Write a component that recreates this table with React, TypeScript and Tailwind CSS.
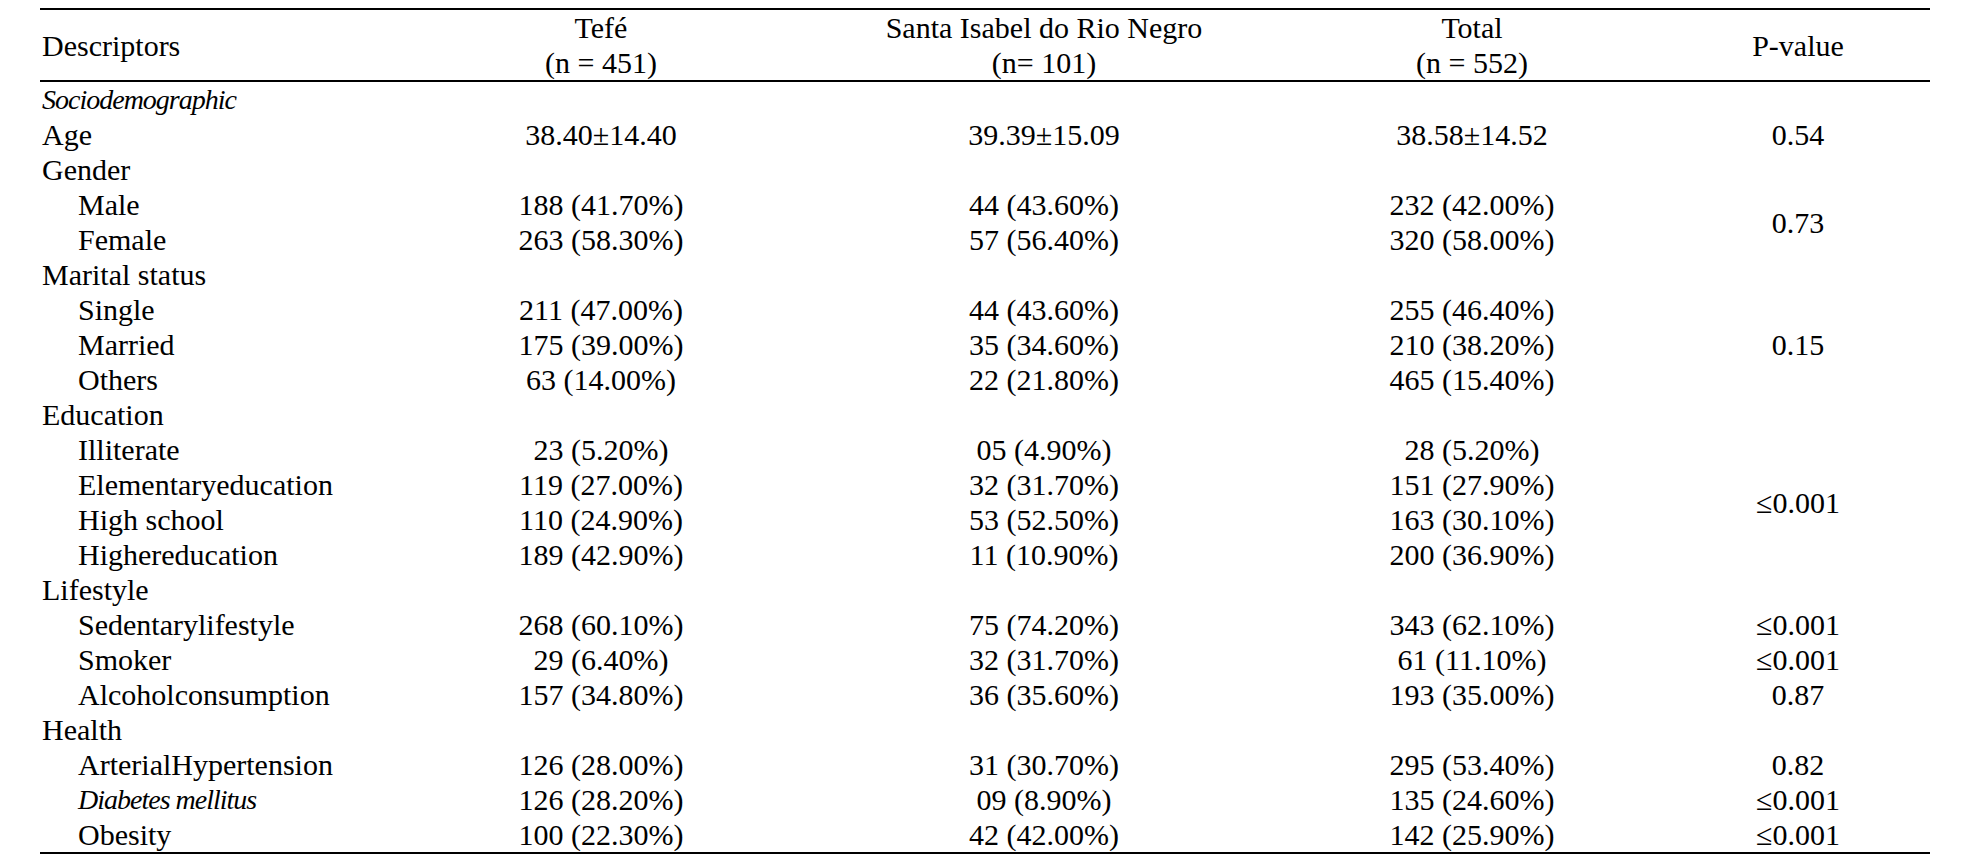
import React from "react";

type Row = {
  label: string;
  level: 0 | 1;
  italic?: boolean;
  cells?: [string, string, string];
  p?: string;
  pSpan?: number;
  pSkip?: boolean;
};

const rows: Row[] = [
  { label: "Sociodemographic", level: 0, italic: true },
  { label: "Age", level: 0, cells: ["38.40\u00b114.40", "39.39\u00b115.09", "38.58\u00b114.52"], p: "0.54" },
  { label: "Gender", level: 0 },
  { label: "Male", level: 1, cells: ["188 (41.70%)", "44 (43.60%)", "232 (42.00%)"], p: "0.73", pSpan: 2 },
  { label: "Female", level: 1, cells: ["263 (58.30%)", "57 (56.40%)", "320 (58.00%)"], pSkip: true },
  { label: "Marital status", level: 0 },
  { label: "Single", level: 1, cells: ["211 (47.00%)", "44 (43.60%)", "255 (46.40%)"], p: "0.15", pSpan: 3 },
  { label: "Married", level: 1, cells: ["175 (39.00%)", "35 (34.60%)", "210 (38.20%)"], pSkip: true },
  { label: "Others", level: 1, cells: ["63 (14.00%)", "22 (21.80%)", "465 (15.40%)"], pSkip: true },
  { label: "Education", level: 0 },
  { label: "Illiterate", level: 1, cells: ["23 (5.20%)", "05 (4.90%)", "28 (5.20%)"], p: "\u22640.001", pSpan: 4 },
  { label: "Elementaryeducation", level: 1, cells: ["119 (27.00%)", "32 (31.70%)", "151 (27.90%)"], pSkip: true },
  { label: "High school", level: 1, cells: ["110 (24.90%)", "53 (52.50%)", "163 (30.10%)"], pSkip: true },
  { label: "Highereducation", level: 1, cells: ["189 (42.90%)", "11 (10.90%)", "200 (36.90%)"], pSkip: true },
  { label: "Lifestyle", level: 0 },
  { label: "Sedentarylifestyle", level: 1, cells: ["268 (60.10%)", "75 (74.20%)", "343 (62.10%)"], p: "\u22640.001" },
  { label: "Smoker", level: 1, cells: ["29 (6.40%)", "32 (31.70%)", "61 (11.10%)"], p: "\u22640.001" },
  { label: "Alcoholconsumption", level: 1, cells: ["157 (34.80%)", "36 (35.60%)", "193 (35.00%)"], p: "0.87" },
  { label: "Health", level: 0 },
  { label: "ArterialHypertension", level: 1, cells: ["126 (28.00%)", "31 (30.70%)", "295 (53.40%)"], p: "0.82" },
  { label: "Diabetes mellitus", level: 1, italic: true, cells: ["126 (28.20%)", "09 (8.90%)", "135 (24.60%)"], p: "\u22640.001" },
  { label: "Obesity", level: 1, cells: ["100 (22.30%)", "42 (42.00%)", "142 (25.90%)"], p: "\u22640.001" },
];

export default function App() {
  const last = rows.length - 1;
  return (
    <div className="min-h-[865px] w-full bg-white pt-[8px] pl-[40px] font-['Liberation_Serif',serif] text-[30px] text-black">
      <table className="w-[1890px] table-fixed border-separate border-spacing-0">
        <colgroup>
          <col className="w-[352px]" />
          <col className="w-[418px]" />
          <col className="w-[468px]" />
          <col className="w-[388px]" />
          <col className="w-[264px]" />
        </colgroup>
        <thead>
          <tr className="leading-[35px]">
            <th className="border-y-2 border-black p-0 pl-[2px] text-left align-middle font-normal">Descriptors</th>
            <th className="border-y-2 border-black p-0 text-center align-middle font-normal">
              <div>Tefé</div>
              <div>(n = 451)</div>
            </th>
            <th className="border-y-2 border-black p-0 text-center align-middle font-normal">
              <div>Santa Isabel do Rio Negro</div>
              <div>(n= 101)</div>
            </th>
            <th className="border-y-2 border-black p-0 text-center align-middle font-normal">
              <div>Total</div>
              <div>(n = 552)</div>
            </th>
            <th className="border-y-2 border-black p-0 text-center align-middle font-normal">P-value</th>
          </tr>
        </thead>
        <tbody>
          {rows.map((r, i) => {
            const isLast = i === last;
            const b = isLast ? "border-b-2 border-black" : "";
            const pLast = r.pSpan ? i + r.pSpan - 1 === last : isLast;
            return (
              <tr key={i} className="leading-[35px]">
                <td
                  className={`p-0 whitespace-nowrap text-left ${r.level === 1 ? "pl-[38px]" : "pl-[2px]"} ${r.italic ? "italic tracking-[-1px] text-[28px]" : ""} ${b}`}
                >
                  {r.label}
                </td>
                {[0, 1, 2].map((c) => (
                  <td key={c} className={`p-0 whitespace-nowrap text-center ${b}`}>
                    {r.cells ? r.cells[c] : ""}
                  </td>
                ))}
                {!r.pSkip && (
                  <td
                    rowSpan={r.pSpan ?? 1}
                    className={`p-0 whitespace-nowrap text-center align-middle ${pLast ? "border-b-2 border-black" : ""}`}
                  >
                    {r.p ?? ""}
                  </td>
                )}
              </tr>
            );
          })}
        </tbody>
      </table>
    </div>
  );
}
